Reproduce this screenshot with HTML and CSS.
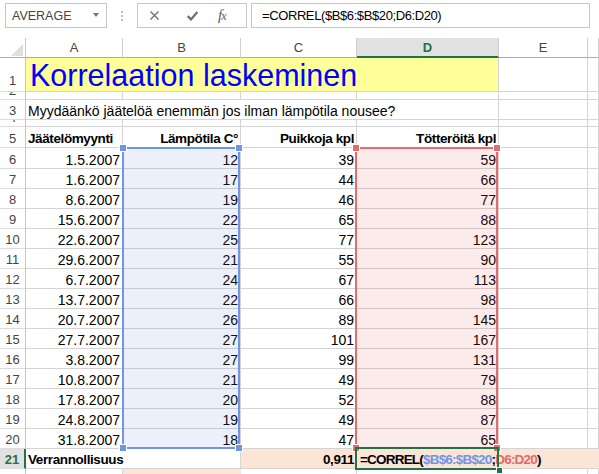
FILE: index.html
```html
<!DOCTYPE html>
<html lang="fi">
<head>
<meta charset="utf-8">
<title>Korrelaatio</title>
<link rel="stylesheet" href="styles.css">
</head>
<body>
<div class="fbar">
  <div class="namebox"><span>AVERAGE</span><span class="nb-arrow"></span></div>
  <div class="grip"><i></i><i></i><i></i></div>
  <div class="fbtns">
    <svg class="ic-x" width="9" height="9" viewBox="0 0 9 9"><path d="M0.5 0.5L8.5 8.5M8.5 0.5L0.5 8.5" stroke="#707070" stroke-width="1.3" fill="none"/></svg>
    <svg class="ic-ok" width="11" height="10" viewBox="0 0 11 10"><path d="M0.7 5L4 8.4L10.4 1" stroke="#707070" stroke-width="2.3" fill="none"/></svg>
    <span class="ic-fx">f<span class="fx-x">x</span></span>
  </div>
  <div class="finput">=CORREL($B$6:$B$20;D6:D20)</div>
</div>
<div class="sheet">
  <div class="grid">
    <div class="corner"><i></i></div><div class="ch">A</div><div class="ch">B</div><div class="ch">C</div><div class="ch chsel">D</div><div class="ch">E</div><div class="ch"></div>

    <div class="rh rh1">1</div><div class="title">Korrelaation laskeminen</div><div></div><div></div>
    <div class="rh">2</div><div></div><div></div><div></div><div></div><div></div><div></div>
    <div class="rh">3</div><div class="span4">Myydäänkö jäätelöä enemmän jos ilman lämpötila nousee?</div><div></div><div></div>
    <div class="rh">4</div><div></div><div></div><div></div><div></div><div></div><div></div>
    <div class="rh">5</div><div class="b">Jäätelömyynti</div><div class="b n">Lämpötila C°</div><div class="b n">Puikkoja kpl</div><div class="b n">Tötteröitä kpl</div><div></div><div></div>

    <div class="rh">6</div><div class="n">1.5.2007</div><div class="n">12</div><div class="n">39</div><div class="n">59</div><div></div><div></div>
    <div class="rh">7</div><div class="n">1.6.2007</div><div class="n">17</div><div class="n">44</div><div class="n">66</div><div></div><div></div>
    <div class="rh">8</div><div class="n">8.6.2007</div><div class="n">19</div><div class="n">46</div><div class="n">77</div><div></div><div></div>
    <div class="rh">9</div><div class="n">15.6.2007</div><div class="n">22</div><div class="n">65</div><div class="n">88</div><div></div><div></div>
    <div class="rh">10</div><div class="n">22.6.2007</div><div class="n">25</div><div class="n">77</div><div class="n">123</div><div></div><div></div>
    <div class="rh">11</div><div class="n">29.6.2007</div><div class="n">21</div><div class="n">55</div><div class="n">90</div><div></div><div></div>
    <div class="rh">12</div><div class="n">6.7.2007</div><div class="n">24</div><div class="n">67</div><div class="n">113</div><div></div><div></div>
    <div class="rh">13</div><div class="n">13.7.2007</div><div class="n">22</div><div class="n">66</div><div class="n">98</div><div></div><div></div>
    <div class="rh">14</div><div class="n">20.7.2007</div><div class="n">26</div><div class="n">89</div><div class="n">145</div><div></div><div></div>
    <div class="rh">15</div><div class="n">27.7.2007</div><div class="n">27</div><div class="n">101</div><div class="n">167</div><div></div><div></div>
    <div class="rh">16</div><div class="n">3.8.2007</div><div class="n">27</div><div class="n">99</div><div class="n">131</div><div></div><div></div>
    <div class="rh">17</div><div class="n">10.8.2007</div><div class="n">21</div><div class="n">49</div><div class="n">79</div><div></div><div></div>
    <div class="rh">18</div><div class="n">17.8.2007</div><div class="n">20</div><div class="n">52</div><div class="n">88</div><div></div><div></div>
    <div class="rh">19</div><div class="n">24.8.2007</div><div class="n">19</div><div class="n">49</div><div class="n">87</div><div></div><div></div>
    <div class="rh">20</div><div class="n">31.8.2007</div><div class="n">18</div><div class="n">47</div><div class="n">65</div><div></div><div></div>

    <div class="rh rhsel">21</div><div class="b span2">Verrannollisuus</div><div class="b n peach">0,911</div><div class="b peach fcell">=CORREL(<span class="ref-b">$B$6:$B$20</span>;<span class="ref-r">D6:D20</span>)</div><div class="peach"></div>
    <div class="rh">22</div><div></div><div class="peach"></div><div></div><div></div><div></div><div></div>
  </div>

  <div class="rng rng-b"><i class="tl"></i><i class="tr"></i><i class="bl"></i><i class="br"></i></div>
  <div class="rng rng-r"><i class="tl"></i><i class="tr"></i><i class="bl"></i><i class="br"></i></div>
  <div class="act"><i class="fh"></i></div>
</div>
</body>
</html>
```

FILE: styles.css
```css
* { box-sizing: border-box; }
html, body { margin: 0; padding: 0; background: #fff; }
body {
  width: 599px;
  height: 474px;
  overflow: hidden;
  font-family: "Liberation Sans", Arial, sans-serif;
  color: #000;
}

/* formula bar */
.fbar {
  display: flex;
  align-items: flex-start;
  height: 38px;
  padding-top: 3px;
}
.namebox {
  margin-left: 5px;
  width: 102px;
  height: 25px;
  border: 1px solid #c6c6c6;
  display: flex;
  align-items: center;
  justify-content: space-between;
  padding: 0 7px 0 6px;
  font-size: 12.5px;
  color: #444;
}
.nb-arrow {
  width: 0;
  height: 0;
  border-left: 3px solid transparent;
  border-right: 3px solid transparent;
  border-top: 4px solid #777;
  margin-top: -2px;
}
.grip {
  width: 30px;
  height: 25px;
  display: flex;
  flex-direction: column;
  align-items: center;
  padding-top: 8px;
  gap: 2px;
}
.grip i {
  display: block;
  width: 2px;
  height: 2px;
  background: #bdbdbd;
}
.fbtns {
  width: 110px;
  height: 25px;
  border: 1px solid #c6c6c6;
  display: flex;
  align-items: center;
  padding-left: 12px;
}
.ic-ok { margin-left: 28px; margin-top: 1px; }
.ic-fx {
  margin-left: 20px;
  font-family: "Liberation Serif", serif;
  font-style: italic;
  font-size: 15px;
  color: #5c5c5c;
  letter-spacing: -1px;
}
.fx-x { font-size: 12px; }
.finput {
  margin-left: 4px;
  width: 339px;
  height: 25px;
  border: 1px solid #c6c6c6;
  padding-left: 10px;
  font-size: 13px;
  line-height: 23px;
  letter-spacing: -0.4px;
  color: #000;
  white-space: nowrap;
}

/* sheet */
.sheet { position: relative; }
.grid {
  display: grid;
  grid-template-columns: 26px 97px 118px 116px 142px 89px 1fr;
  grid-template-rows: 20px 34px 8px 20px 7px 21px 21px repeat(14, 20px) 20px 20px;
}
.grid > div {
  border-right: 1px solid #d4d4d4;
  border-bottom: 1px solid #d4d4d4;
  overflow: hidden;
  white-space: nowrap;
  display: flex;
  align-items: flex-end;
  padding: 0 2px 1px 2px;
  font-size: 14px;
  line-height: 14px;
  min-width: 0;
}
.grid > .n { justify-content: flex-end; }
.grid > .b { font-weight: bold; font-size: 13.5px; letter-spacing: -0.4px; }

.grid > .corner {
  justify-content: flex-end;
  padding: 0 2px 1px 0;
  border-right-color: #c6c6c6;
  border-bottom-color: #ababab;
}
.corner i {
  display: block;
  width: 0;
  height: 0;
  border-left: 12px solid transparent;
  border-bottom: 12px solid #dfdfdf;
}
.grid > .ch {
  justify-content: center;
  font-size: 13px;
  color: #444;
  border-right-color: #cfcfcf;
  border-bottom-color: #ababab;
  padding-bottom: 2px;
}
.grid > .chsel {
  background: #e1e1e1;
  color: #217346;
  font-weight: bold;
  border-bottom: 2px solid #217346;
  padding-bottom: 1px;
}
.grid > .rh {
  justify-content: center;
  font-size: 13px;
  color: #444;
  border-right-color: #c6c6c6;
  border-bottom-color: #dcdcdc;
  padding: 0 0 1px 0;
}
.grid > .rh1 { padding-bottom: 3px; }
.grid > .rhsel {
  background: #e1e1e1;
  color: #217346;
  font-weight: bold;
  border-right: 2px solid #217346;
}

.grid > .title {
  grid-column: span 4;
  background: #ffff99;
  color: #0000ff;
  font-size: 30.5px;
  line-height: 30px;
  padding-left: 4px;
}
.grid > .span4 { grid-column: span 4; }
.grid > .span2 { grid-column: span 2; }
.grid > .peach { background: #fce4d6; border-right-color: #fce4d6; }
.grid > .fcell {
  grid-column: span 2;
  letter-spacing: -0.8px;
  padding-left: 3px;
}
.ref-b { color: #6f94e8; }
.ref-r { color: #e26a6a; }

/* formula reference overlays */
.rng {
  position: absolute;
  top: 109px;
  height: 302px;
  border: 2px solid;
}
.rng-b {
  left: 122px;
  width: 118px;
  border-color: #6f94e8;
  background: rgba(90, 130, 225, 0.12);
}
.rng-r {
  left: 355px;
  width: 143px;
  border-color: #e46c6c;
  background: rgba(230, 90, 90, 0.12);
}
.rng i {
  position: absolute;
  width: 6px;
  height: 6px;
  box-shadow: 0 0 0 1px #fff;
}
.rng-b i { background: #6f94e8; }
.rng-r i { background: #e46c6c; }
.rng .tl { left: -4px; top: -4px; }
.rng .tr { right: -4px; top: -4px; }
.rng .bl { left: -4px; bottom: -4px; }
.rng .br { right: -4px; bottom: -4px; }

.act {
  position: absolute;
  left: 355px;
  top: 409px;
  width: 144px;
  height: 23px;
  border: 2px solid #217346;
}
.fh {
  position: absolute;
  right: -5px;
  bottom: -5px;
  width: 5px;
  height: 5px;
  background: #217346;
  box-shadow: 0 0 0 1px #fff;
}
```
